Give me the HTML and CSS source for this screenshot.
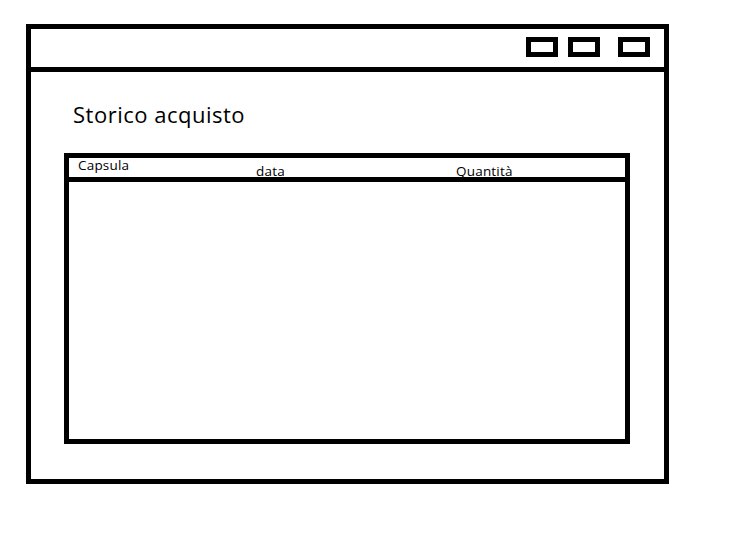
FILE: index.html
```html
<!DOCTYPE html>
<html lang="it">
<head>
<meta charset="utf-8">
<title>Storico acquisto</title>
<link rel="stylesheet" href="styles.css">
</head>
<body>
<div class="window">
  <div class="titlebar">
    <span class="btn"></span>
    <span class="btn"></span>
    <span class="btn btn-last"></span>
  </div>
  <div class="content">
    <h1 class="title">Storico acquisto</h1>
    <div class="table">
      <div class="thead">
        <span class="th th-capsula">Capsula</span>
        <span class="th th-data">data</span>
        <span class="th th-qta">Quantità</span>
      </div>
      <div class="tbody"></div>
    </div>
  </div>
</div>
</body>
</html>
```

FILE: styles.css
```css
*{margin:0;padding:0;box-sizing:border-box;}
body{background:#fff;font-family:"Open Sans","Noto Sans",sans-serif;color:#000;}

.window{width:643px;height:460px;margin:24px 0 0 26px;border:5px solid #000;}

.titlebar{height:43px;border-bottom:5px solid #000;display:flex;justify-content:flex-end;align-items:flex-start;padding:8px 14px 0 0;}
.btn{width:32px;height:20px;border:5px solid #000;margin-left:10px;}
.btn-last{margin-left:18px;}

.content{padding:0 34px 0 33px;}
.title{font-size:22px;letter-spacing:0.5px;font-weight:normal;line-height:28px;margin:28px 0 0 9px;height:53px;}

.table{height:291px;border:5px solid #000;}
.thead{height:24px;border-bottom:5px solid #000;display:flex;font-size:13.5px;letter-spacing:0.2px;line-height:14px;}
.th{display:block;}
.th-capsula{padding:0 0 0 9px;width:187px;}
.th-data{padding-top:6px;width:200px;}
.th-qta{padding-top:6px;}
```
